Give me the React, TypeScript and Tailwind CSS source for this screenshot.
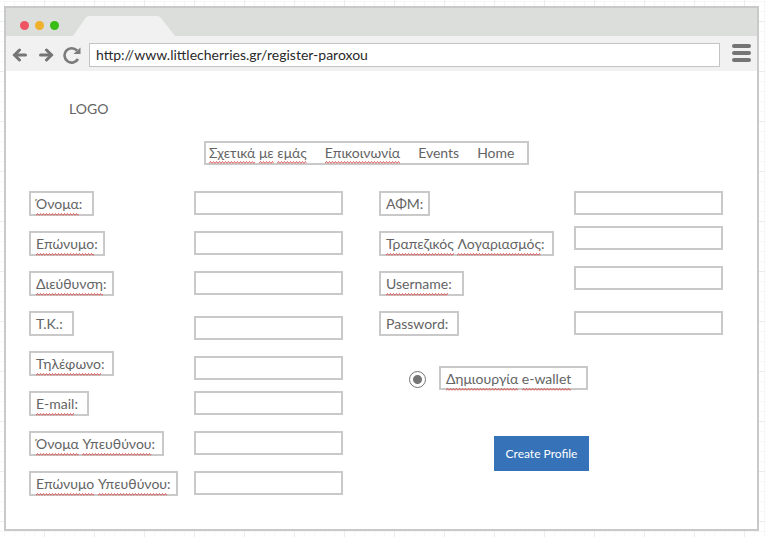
import { useId } from 'react';
import type { ReactNode } from 'react';

type Slot = 'start' | 'center' | 'end';

type FieldProps = {
  id: string;
  words: string[];
  tail?: string;
  checked?: boolean;
  width: string;
  slot?: Slot;
  type?: string;
};

const slots: Record<Slot, string> = {
  start: 'self-start',
  center: 'self-center',
  end: 'self-end',
};

/** A word with the spell checker's red zigzag under it. */
function Flagged({ children }: { children: ReactNode }) {
  const id = useId();
  return (
    <span className="relative inline-block">
      {children}
      <svg className="absolute -bottom-px left-0 h-[3px] w-full" aria-hidden="true">
        <defs>
          <pattern id={id} width="3" height="3" patternUnits="userSpaceOnUse">
            <path d="M0 2.5 L1.5 0.5 L3 2.5" fill="none" stroke="#dc4a46" strokeWidth="0.9" />
          </pattern>
        </defs>
        <rect width="100%" height="3" fill={`url(#${id})`} />
      </svg>
    </span>
  );
}

function Words({ words }: { words: string[] }) {
  return (
    <>
      {words.map((word, i) => (
        <span key={word}>
          {i > 0 && ' '}
          <Flagged>{word}</Flagged>
        </span>
      ))}
    </>
  );
}

function Field({ id, words, tail = ':', checked = true, width, slot = 'center', type = 'text' }: FieldProps) {
  return (
    <div className="flex h-[34px] justify-between">
      <label
        htmlFor={id}
        className={`mt-[5px] h-[25px] border-2 border-[#c9c9c9] pl-[5px] leading-[22px] whitespace-nowrap ${width}`}
      >
        {checked ? <Words words={words} /> : words.join(' ')}
        {tail}
      </label>
      <input
        id={id}
        type={type}
        className={`h-6 w-[149px] border-2 border-[#c9c9c9] bg-white px-1 outline-none ${slots[slot]}`}
      />
    </div>
  );
}

const personal: FieldProps[] = [
  { id: 'name', words: ['Όνομα'], width: 'w-[65px]' },
  { id: 'surname', words: ['Επώνυμο'], width: 'w-[76px]' },
  { id: 'address', words: ['Διεύθυνση'], width: 'w-[85px]' },
  { id: 'zip', words: ['Τ.Κ.'], checked: false, width: 'w-[45px]', slot: 'end' },
  { id: 'phone', words: ['Τηλέφωνο'], width: 'w-[85px]', slot: 'end' },
  { id: 'email', words: ['E-mail'], width: 'w-[60px]' },
  { id: 'manager-name', words: ['Όνομα', 'Υπευθύνου'], width: 'w-[135px]' },
  { id: 'manager-surname', words: ['Επώνυμο', 'Υπευθύνου'], width: 'w-[149px]' },
];

const account: FieldProps[] = [
  { id: 'vat', words: ['ΑΦΜ'], checked: false, width: 'w-[51px]' },
  { id: 'bank', words: ['Τραπεζικός', 'Λογαριασμός'], width: 'w-[175px]', slot: 'start' },
  { id: 'username', words: ['Username'], width: 'w-[85px]', slot: 'start' },
  { id: 'password', words: ['Password'], checked: false, width: 'w-[80px]', type: 'password' },
];

function Arrow({ flip = false }: { flip?: boolean }) {
  return (
    <svg
      viewBox="0 0 16 14"
      className={`h-[14px] w-4 ${flip ? 'rotate-180' : ''}`}
      fill="none"
      stroke="#757575"
      strokeWidth="3"
      aria-hidden="true"
    >
      <path d="M7.500 2 L2.500 7 L7.500 12" strokeLinecap="round" />
      <path d="M3 7 H13.500" strokeLinecap="round" />
    </svg>
  );
}

function Browser() {
  return (
    <header>
      <div className="flex h-7 items-end bg-[#dcdedc]">
        <div className="flex gap-[6px] self-center pt-[7px] pl-[14px]">
          <span className="size-[9px] rounded-full bg-[#ee5461]" />
          <span className="size-[9px] rounded-full bg-[#efb02c]" />
          <span className="size-[9px] rounded-full bg-[#37bd14]" />
        </div>
        <svg viewBox="0 0 102 20" className="ml-[14px] h-5 w-[102px]" aria-hidden="true">
          <path d="M0 20 L12.500 2 Q14 0 16.500 0 H84 Q86.500 0 88 2 L102 20 Z" fill="#f1f1f1" />
        </svg>
      </div>
      <div className="flex h-[35px] items-center bg-[#f1f1f1] pt-[3px] pr-[6px] pl-[6px]">
        <button type="button" aria-label="Back">
          <Arrow />
        </button>
        <button type="button" aria-label="Forward" className="ml-[10px]">
          <Arrow flip />
        </button>
        <button type="button" aria-label="Reload" className="ml-[9px]">
          <svg viewBox="0 0 18 18" className="size-[18px]" fill="none" aria-hidden="true">
            <path d="M14 4.500 A7.200 7.200 0 1 0 15 13" stroke="#7b7b7b" strokeWidth="2.600" />
            <path d="M17.500 1.500 V8 H10.500 Z" fill="#7b7b7b" />
          </svg>
        </button>
        <input
          aria-label="Address"
          defaultValue="http://www.littlecherries.gr/register-paroxou"
          className="ml-2 h-6 min-w-0 flex-1 border border-[#c4c4c4] bg-white px-[6px] pb-[2px] text-[#2a2a2a] outline-none"
        />
        <button type="button" aria-label="Menu" className="mb-1 ml-3 flex flex-col gap-[3px]">
          <span className="h-1 w-[19px] rounded-full bg-[#757575]" />
          <span className="h-1 w-[19px] rounded-full bg-[#757575]" />
          <span className="h-1 w-[19px] rounded-full bg-[#757575]" />
        </button>
      </div>
    </header>
  );
}

export default function App() {
  return (
    <div className="min-h-screen bg-white bg-[linear-gradient(to_right,#e9eeea_1px,transparent_1px),linear-gradient(to_bottom,#e9eeea_1px,transparent_1px),linear-gradient(to_right,#f5f8f5_1px,transparent_1px),linear-gradient(to_bottom,#f5f8f5_1px,transparent_1px)] bg-[size:50px_50px,50px_50px,10px_10px,10px_10px] bg-[position:44px_21px,44px_21px,4px_1px,4px_1px] pt-[6px] pr-[6px] pb-[6px] pl-1 font-['Lato','Noto_Sans',sans-serif] text-[14px] text-[#646464]">
      <div className="border-2 border-[#c9c9c9] bg-white">
        <Browser />
        <main className="pt-7 pr-[34px] pb-[29px] pl-[23px]">
          <div className="pl-10 leading-5">LOGO</div>
          <nav className="mt-[22px] ml-[175px] flex h-6 w-[325px] gap-[18px] border-2 border-[#c9c9c9] pl-[3px] leading-5 whitespace-nowrap">
            <a href="#about">
              <Words words={['Σχετικά', 'με', 'εμάς']} />
            </a>
            <a href="#contact">
              <Words words={['Επικοινωνία']} />
            </a>
            <a href="#events">Events</a>
            <a href="#home">Home</a>
          </nav>
          <form className="mt-[21px] flex gap-9" onSubmit={(e) => e.preventDefault()}>
            <div className="flex min-w-0 flex-[314] flex-col gap-[6px]">
              {personal.map((field) => (
                <Field key={field.id} {...field} />
              ))}
            </div>
            <div className="flex min-w-0 flex-[344] flex-col gap-[6px]">
              {account.map((field) => (
                <Field key={field.id} {...field} />
              ))}
              <div className="mt-5 flex items-center pl-[30px]">
                <input
                  id="wallet"
                  type="radio"
                  defaultChecked
                  className="mt-[3px] size-[17px] appearance-none rounded-full border border-[#757575] bg-white checked:bg-[radial-gradient(circle,#757575_4px,transparent_5px)]"
                />
                <label
                  htmlFor="wallet"
                  className="ml-[13px] h-6 w-[149px] border-2 border-[#c9c9c9] pl-[5px] leading-[22px] whitespace-nowrap"
                >
                  <Words words={['Δημιουργία', 'e-wallet']} />
                </label>
              </div>
              <button
                type="submit"
                className="mt-10 ml-[115px] h-[35px] w-[95px] bg-[#3572b8] text-[12px] whitespace-nowrap text-white"
              >
                Create Profile
              </button>
            </div>
          </form>
        </main>
      </div>
    </div>
  );
}
